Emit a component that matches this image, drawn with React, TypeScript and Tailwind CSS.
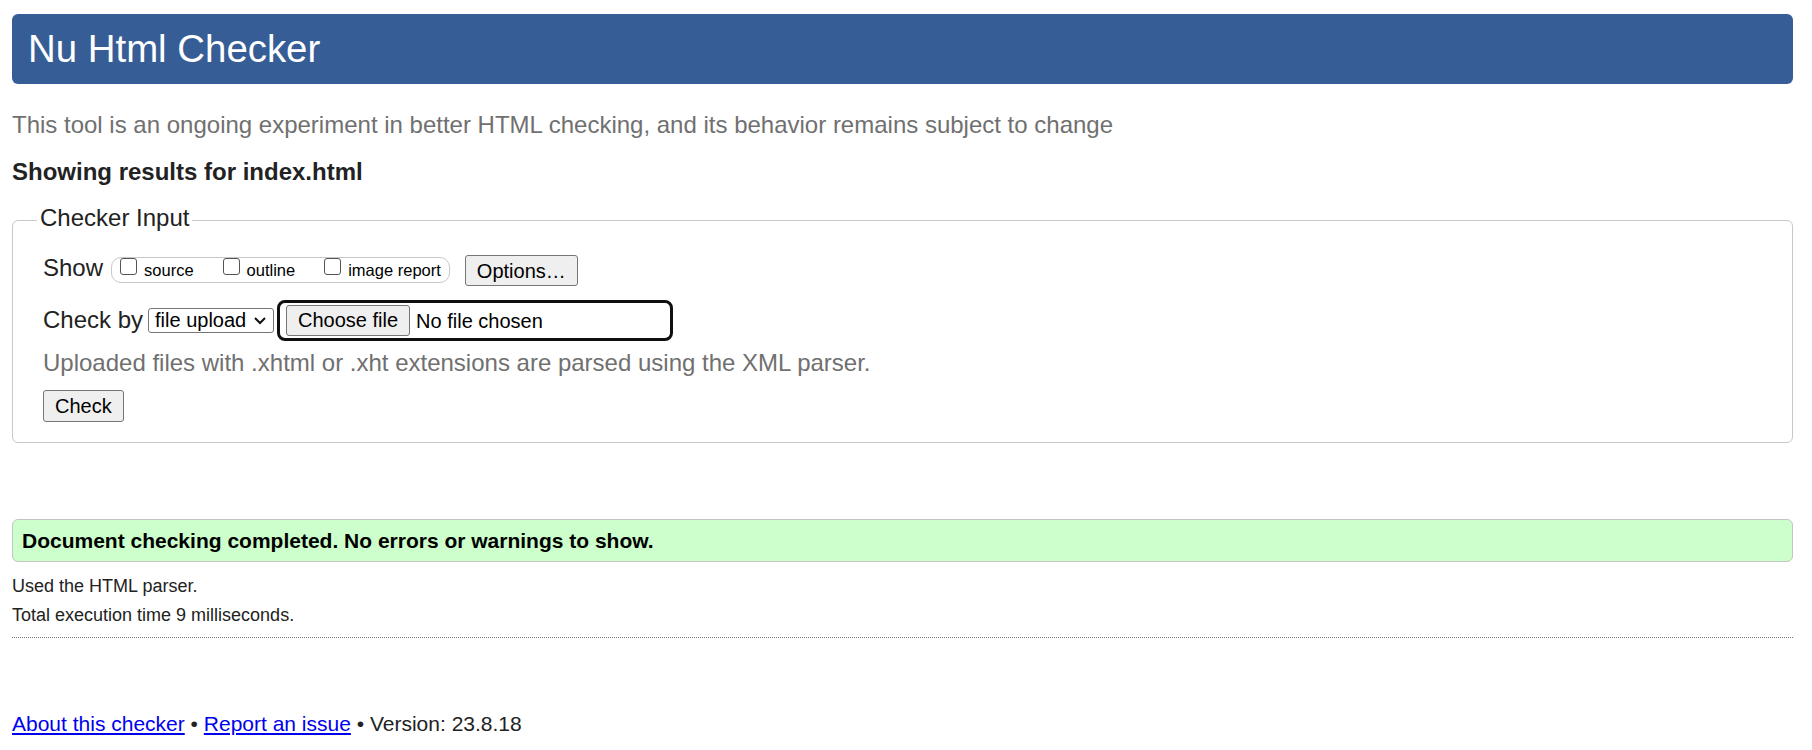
import React from "react";

function Box() {
  return <span className="block w-[17px] h-[17px] border border-[#555] rounded-[3px] bg-white shrink-0" />;
}

function CheckItem({ label, first }: { label: string; first?: boolean }) {
  return (
    <div className={`flex items-start ${first ? "" : "ml-[29px]"}`}>
      <Box />
      <span className="ml-[7px] text-[16.5px] leading-[24px] text-black">{label}</span>
    </div>
  );
}

export default function App() {
  return (
    <div
      className="min-h-[750px] bg-white pl-[12px] pr-[19px] pt-[14px] text-[#222]"
      style={{ fontFamily: '"Liberation Sans", Arial, Helvetica, sans-serif' }}
    >
      <div className="h-[70px] bg-[#365d95] rounded-[6px] flex items-center pl-[16px]">
        <h1 className="text-white text-[38.4px] leading-[44px] font-normal">Nu Html Checker</h1>
      </div>

      <p className="mt-[27px] text-[24px] leading-[28px] text-[#707070]">
        This tool is an ongoing experiment in better HTML checking, and its behavior remains subject to change
      </p>

      <h2 className="mt-[19px] text-[24px] leading-[28px] font-bold text-[#222]">Showing results for index.html</h2>

      <div className="mt-[34px] border border-[#c8c8c8] rounded-[6px] pl-[24px] pb-[20px] flex flex-col">
        <span className="-mt-[17px] w-fit bg-white px-[3px] text-[24px] leading-[28px] text-[#222]">Checker Input</span>

        <div className="pl-[6px] flex flex-col">
          <div className="mt-[23px] h-[31px] flex items-start">
            <span className="-mt-[1px] text-[24px] leading-[28px]">Show</span>
            <div className="ml-[8px] mt-[2px] h-[26px] flex items-start border border-[#c8c8c8] rounded-[10px] pl-[8px] pr-[8px]">
              <CheckItem label="source" first />
              <CheckItem label="outline" />
              <CheckItem label="image report" />
            </div>
            <button className="ml-[15px] h-[31px] px-[11px] bg-[#efefef] border border-[#767676] rounded-[3px] text-[20px] leading-[24px] text-black">
              Options…
            </button>
          </div>

          <div className="mt-[14px] h-[41px] flex items-center">
            <span className="-mt-[2px] text-[24px] leading-[28px]">Check by</span>
            <div className="ml-[5px] w-[126px] h-[25px] border border-[#767676] rounded-[3px] flex items-center justify-between pl-[6px] pr-[6px] bg-white">
              <span className="text-[20px] leading-[23px] text-black">file upload</span>
              <svg width="14" height="9" viewBox="0 0 14 9" className="shrink-0">
                <path d="M2 2 L7 7 L12 2" fill="none" stroke="#111" strokeWidth="2" />
              </svg>
            </div>
            <div className="ml-[3px] w-[396px] h-[41px] border-[3px] border-[#101010] rounded-[8px] flex items-center pl-[6px]">
              <span className="h-[31px] px-[11px] bg-[#efefef] border border-[#767676] rounded-[3px] text-[20px] leading-[29px] text-black">
                Choose file
              </span>
              <span className="ml-[6px] text-[20px] leading-[24px] text-black">No file chosen</span>
            </div>
          </div>

          <p className="mt-[8px] text-[24px] leading-[28px] text-[#707070]">
            Uploaded files with .xhtml or .xht extensions are parsed using the XML parser.
          </p>

          <div className="mt-[13px]">
            <button className="h-[32px] px-[11px] bg-[#efefef] border border-[#767676] rounded-[3px] text-[20px] leading-[24px] text-black">
              Check
            </button>
          </div>
        </div>
      </div>

      <div className="mt-[76px] h-[43px] bg-[#ccffcc] border border-[#c4c4c4] rounded-[6px] flex items-center pl-[9px]">
        <span className="text-[21px] leading-[24px] font-bold text-black">
          Document checking completed. No errors or warnings to show.
        </span>
      </div>

      <p className="mt-[10px] text-[18px] leading-[28px] text-[#222]">Used the HTML parser.</p>
      <p className="mt-[1px] text-[18px] leading-[28px] text-[#222]">Total execution time 9 milliseconds.</p>

      <div className="mt-[8px] border-t border-dotted border-[#777]" />

      <p className="mt-[72px] text-[21px] leading-[28px] text-[#222]">
        <a href="#" className="text-[#0000ee] underline">About this checker</a>
        {" • "}
        <a href="#" className="text-[#0000ee] underline">Report an issue</a>
        {" • Version: 23.8.18"}
      </p>
    </div>
  );
}
